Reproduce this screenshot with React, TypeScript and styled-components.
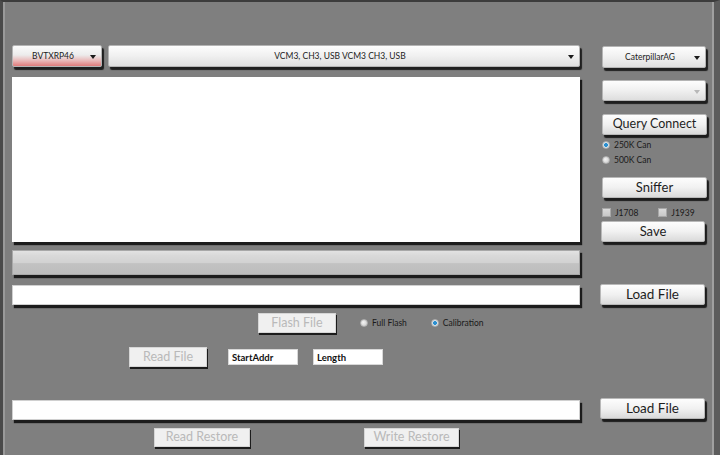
import React from "react";
import styled, { createGlobalStyle } from "styled-components";

const Global = createGlobalStyle`
  html, body { margin: 0; padding: 0; background: #7f7f7f; }
  body { font-family: Lato, "Open Sans", "Liberation Sans", sans-serif; }
  * { box-sizing: border-box; }
`;

const Window = styled.div`
  width: 720px;
  height: 455px;
  background: #7f7f7f;
  border-top: 2px solid #3c3c3c;
  border-left: 3px solid #4a4a4a;
  border-right: 6px solid #5c5c5c;
  box-shadow: inset 2px 0 0 #9a9a9a, inset -2px 0 0 #a0a0a0;
  display: flex;
  padding-top: 43px;
  padding-left: 9px;
  overflow: hidden;
`;

const LeftCol = styled.div`
  width: 568px;
  display: flex;
  flex-direction: column;
`;

const RightCol = styled.div`
  width: 107px;
  margin-left: 20px;
  display: flex;
  flex-direction: column;
`;

const Row = styled.div<{ $mt?: number; $h?: number }>`
  display: flex;
  align-items: center;
  margin-top: ${(p) => p.$mt ?? 0}px;
  height: ${(p) => p.$h ?? 20}px;
`;

const Combo = styled.div<{ $w: number; $red?: boolean; $ml?: number; $mt?: number; $h?: number }>`
  position: relative;
  width: ${(p) => p.$w}px;
  height: ${(p) => p.$h ?? 22}px;
  margin-left: ${(p) => p.$ml ?? 0}px;
  margin-top: ${(p) => p.$mt ?? 0}px;
  flex-shrink: 0;
  background: ${(p) =>
    p.$red
      ? "linear-gradient(#fbfbfb 0%, #ececec 45%, #e9b4b4 75%, #df7a7a 100%)"
      : "linear-gradient(#fdfdfd 0%, #f0f0f0 50%, #dedede 100%)"};
  border: 1px solid #b4b4b4;
  border-radius: 2px;
  box-shadow: 2px 3px 1px #1e1e1e;
  display: flex;
  align-items: center;
  justify-content: center;
  font-size: 8.5px;
  color: #222;
  padding-right: 8px;
`;

const Arrow = styled.span<{ $dim?: boolean }>`
  position: absolute;
  right: 5px;
  top: 50%;
  margin-top: -1px;
  width: 0;
  height: 0;
  border-left: 3px solid transparent;
  border-right: 3px solid transparent;
  border-top: 4px solid ${(p) => (p.$dim ? "#b8b8b8" : "#1a1a1a")};
`;

const Memo = styled.div`
  margin-top: 10px;
  height: 165px;
  background: #ffffff;
  box-shadow: 2px 3px 1px #1c1c1c;
`;

const Progress = styled.div`
  margin-top: 8px;
  height: 25px;
  border: 1px solid #a8a8a8;
  background: linear-gradient(#e2e2e2 0%, #d9d9d9 20%, #d2d2d2 50%, #c2c2c2 55%, #bdbdbd 100%);
  box-shadow: 2px 3px 1px #1c1c1c;
`;

const TextBox = styled.div<{ $mt: number }>`
  margin-top: ${(p) => p.$mt}px;
  height: 20px;
  background: #ffffff;
  border: 1px solid #d0d0d0;
  box-shadow: 2px 3px 1px #1c1c1c;
`;

const Button = styled.div<{ $w: number; $h?: number; $fs?: number; $ml?: number; $mt?: number }>`
  width: ${(p) => p.$w}px;
  height: ${(p) => p.$h ?? 21}px;
  margin-left: ${(p) => p.$ml ?? 0}px;
  margin-top: ${(p) => p.$mt ?? 0}px;
  flex-shrink: 0;
  background: linear-gradient(#fdfdfd 0%, #f1f1f1 50%, #dadada 100%);
  border: 1px solid #b8b8b8;
  border-radius: 2px;
  box-shadow: 2px 3px 1px #1c1c1c;
  display: flex;
  align-items: center;
  justify-content: center;
  font-size: ${(p) => p.$fs ?? 13}px;
  color: #1e1e1e;
  line-height: 1;
`;

const Disabled = styled.div<{ $w: number; $h?: number; $ml?: number }>`
  width: ${(p) => p.$w}px;
  height: ${(p) => p.$h ?? 20}px;
  margin-left: ${(p) => p.$ml ?? 0}px;
  flex-shrink: 0;
  background: #f0f0f0;
  border: 1px solid #d6d6d6;
  box-shadow: 1px 2px 0 #1c1c1c;
  display: flex;
  align-items: center;
  justify-content: center;
  font-size: 12.5px;
  color: #b9b9b9;
  line-height: 1;
`;

const SmallInput = styled.div<{ $ml: number }>`
  width: 70px;
  height: 16px;
  margin-left: ${(p) => p.$ml}px;
  background: #fff;
  border: 1px solid #d8d8d8;
  display: flex;
  align-items: center;
  padding-left: 3px;
  font-size: 9.5px;
  font-weight: 700;
  color: #111;
`;

const Option = styled.div<{ $ml?: number }>`
  display: flex;
  align-items: center;
  margin-left: ${(p) => p.$ml ?? 0}px;
  font-size: 8.5px;
  color: #1a1a1a;
  gap: 4px;
`;

const Radio = styled.span<{ $on?: boolean }>`
  width: 8px;
  height: 8px;
  border-radius: 50%;
  background: ${(p) =>
    p.$on
      ? "radial-gradient(circle, #2b8fd0 0 1.8px, #dfe9ef 2.2px, #c9d3d9 100%)"
      : "radial-gradient(circle at 40% 40%, #f4f4f4, #c6c6c6)"};
  border: 1px solid #b0b0b0;
`;

const Check = styled.span`
  width: 9px;
  height: 9px;
  background: linear-gradient(#dadada, #c8c8c8);
  border: 1px solid #a8a8a8;
`;

const Stack = styled.div<{ $mt: number; $h: number; $ml?: number }>`
  margin-top: ${(p) => p.$mt}px;
  margin-left: ${(p) => p.$ml ?? 0}px;
  height: ${(p) => p.$h}px;
  display: flex;
  align-items: center;
`;

export default function App() {
  return (
    <>
      <Global />
      <Window>
        <LeftCol>
          <Row $h={22}>
            <Combo $w={90} $red>
              BVTXRP46
              <Arrow />
            </Combo>
            <Combo $w={472} $ml={6}>
              VCM3, CH3, USB VCM3 CH3, USB
              <Arrow />
            </Combo>
          </Row>
          <Memo />
          <Progress />
          <TextBox $mt={10} />
          <Row $mt={8} $h={20}>
            <Disabled $w={78} $ml={246}>Flash File</Disabled>
            <Option $ml={24}>
              <Radio />
              Full Flash
            </Option>
            <Option $ml={24}>
              <Radio $on />
              Calibration
            </Option>
          </Row>
          <Row $mt={14} $h={20}>
            <Disabled $w={78} $ml={117}>Read File</Disabled>
            <SmallInput $ml={21}>StartAddr</SmallInput>
            <SmallInput $ml={15}>Length</SmallInput>
          </Row>
          <TextBox $mt={33} />
          <Row $mt={8} $h={19}>
            <Disabled $w={96} $h={19} $ml={142}>Read Restore</Disabled>
            <Disabled $w={95} $h={19} $ml={114}>Write Restore</Disabled>
          </Row>
        </LeftCol>
        <RightCol>
          <Combo $w={104} $ml={2} $mt={1}>
            CaterpillarAG
            <Arrow />
          </Combo>
          <Combo $w={104} $ml={2} $mt={12} $h={21}>
            <Arrow $dim />
          </Combo>
          <Button $w={105} $ml={2} $mt={13} $fs={12.5}>Query Connect</Button>
          <Stack $mt={2} $h={15} $ml={2}>
            <Option>
              <Radio $on />
              250K Can
            </Option>
          </Stack>
          <Stack $mt={0} $h={15} $ml={2}>
            <Option>
              <Radio />
              500K Can
            </Option>
          </Stack>
          <Button $w={105} $ml={2} $mt={10} $fs={13}>Sniffer</Button>
          <Stack $mt={7} $h={15} $ml={2}>
            <Option>
              <Check />
              J1708
            </Option>
            <Option $ml={20}>
              <Check />
              J1939
            </Option>
          </Stack>
          <Button $w={104} $ml={1} $mt={1} $fs={13}>Save</Button>
          <Button $w={105} $mt={42} $fs={13.5}>Load File</Button>
          <Button $w={105} $mt={93} $fs={13.5}>Load File</Button>
        </RightCol>
      </Window>
    </>
  );
}
